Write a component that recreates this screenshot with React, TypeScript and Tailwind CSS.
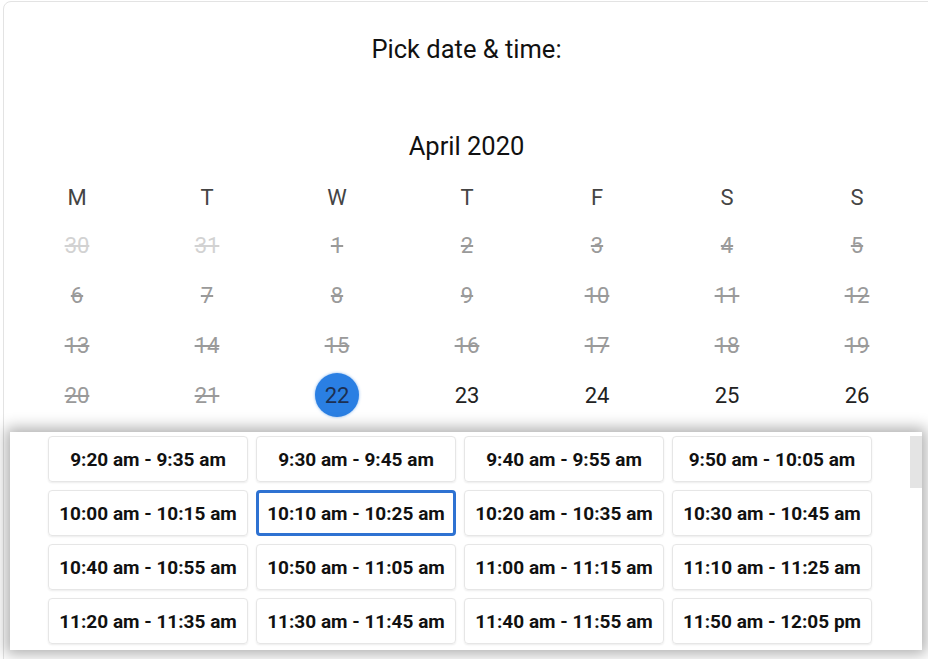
import React from "react";

const font = { fontFamily: "Roboto, 'Liberation Sans', sans-serif" };

type Day = { n: number; state: "out" | "past" | "sel" | "ok" };

const rows: Day[][] = [
  [
    { n: 30, state: "out" },
    { n: 31, state: "out" },
    { n: 1, state: "past" },
    { n: 2, state: "past" },
    { n: 3, state: "past" },
    { n: 4, state: "past" },
    { n: 5, state: "past" },
  ],
  [6, 7, 8, 9, 10, 11, 12].map((n) => ({ n, state: "past" as const })),
  [13, 14, 15, 16, 17, 18, 19].map((n) => ({ n, state: "past" as const })),
  [
    { n: 20, state: "past" },
    { n: 21, state: "past" },
    { n: 22, state: "sel" },
    { n: 23, state: "ok" },
    { n: 24, state: "ok" },
    { n: 25, state: "ok" },
    { n: 26, state: "ok" },
  ],
];

const slots = [
  "9:20 am - 9:35 am",
  "9:30 am - 9:45 am",
  "9:40 am - 9:55 am",
  "9:50 am - 10:05 am",
  "10:00 am - 10:15 am",
  "10:10 am - 10:25 am",
  "10:20 am - 10:35 am",
  "10:30 am - 10:45 am",
  "10:40 am - 10:55 am",
  "10:50 am - 11:05 am",
  "11:00 am - 11:15 am",
  "11:10 am - 11:25 am",
  "11:20 am - 11:35 am",
  "11:30 am - 11:45 am",
  "11:40 am - 11:55 am",
  "11:50 am - 12:05 pm",
];

function DayCell({ d }: { d: Day }) {
  if (d.state === "sel") {
    return (
      <div className="flex items-center justify-center">
        <div className="w-[44px] h-[44px] rounded-full bg-[#2a7fe3] flex items-center justify-center text-[#1c2f52] text-[22px] shadow-[0_0_3px_rgba(42,127,227,0.6)]">
          {d.n}
        </div>
      </div>
    );
  }
  const cls =
    d.state === "out"
      ? "text-[#d2d2d2] line-through"
      : d.state === "past"
      ? "text-[#9a9a9a] line-through"
      : "text-[#222]";
  return (
    <div className="flex items-center justify-center">
      <span className={`text-[22px] ${cls}`}>{d.n}</span>
    </div>
  );
}

export default function App() {
  return (
    <div className="w-[928px] h-[659px] overflow-hidden bg-white relative" style={font}>
      <div className="ml-[3px] mt-[1px] w-[940px] h-[700px] border border-[#e3e3e3] rounded-[8px] bg-white">
        <div className="h-[94px] flex items-center justify-center w-[925px] text-[25.5px] text-[#111]">
          Pick date &amp; time:
        </div>
        <div className="h-[25px]" />
        <div className="h-[50px] flex items-center justify-center w-[925px] text-[25.5px] text-[#111]">
          April 2020
        </div>
        <div className="pl-[8px] w-[918px]">
          <div className="grid grid-cols-7 h-[49px] items-center pt-[4px]">
            {["M", "T", "W", "T", "F", "S", "S"].map((l, i) => (
              <div key={i} className="text-center text-[22px] text-[#444]">
                {l}
              </div>
            ))}
          </div>
          {rows.map((r, i) => (
            <div key={i} className="grid grid-cols-7 h-[50px]">
              {r.map((d, j) => (
                <DayCell key={j} d={d} />
              ))}
            </div>
          ))}
        </div>
      </div>

      <div className="absolute left-[10px] top-[432px] w-[912px] h-[218px] bg-white shadow-[0_0_14px_4px_rgba(0,0,0,0.32)] flex">
        <div className="flex-1 flex justify-center pt-[4px]">
          <div className="grid grid-cols-[repeat(4,200px)] auto-rows-[46px] gap-[8px]">
            {slots.map((s) => {
              const sel = s === "10:10 am - 10:25 am";
              return (
                <div
                  key={s}
                  className={
                    sel
                      ? "rounded-[4px] border-[3px] border-[#2e72d2] flex items-center justify-center pt-[2px] text-[19px] font-bold text-[#111] whitespace-nowrap"
                      : "rounded-[4px] border border-[#e6e6e6] shadow-[0_1px_2px_rgba(0,0,0,0.08)] flex items-center justify-center pt-[2px] text-[19px] font-bold text-[#111] whitespace-nowrap"
                  }
                >
                  {s}
                </div>
              );
            })}
          </div>
        </div>
        <div className="w-[12px] h-full bg-white flex flex-col">
          <div className="mt-[4px] h-[52px] w-full bg-[#e4e4e4]" />
        </div>
      </div>
    </div>
  );
}
